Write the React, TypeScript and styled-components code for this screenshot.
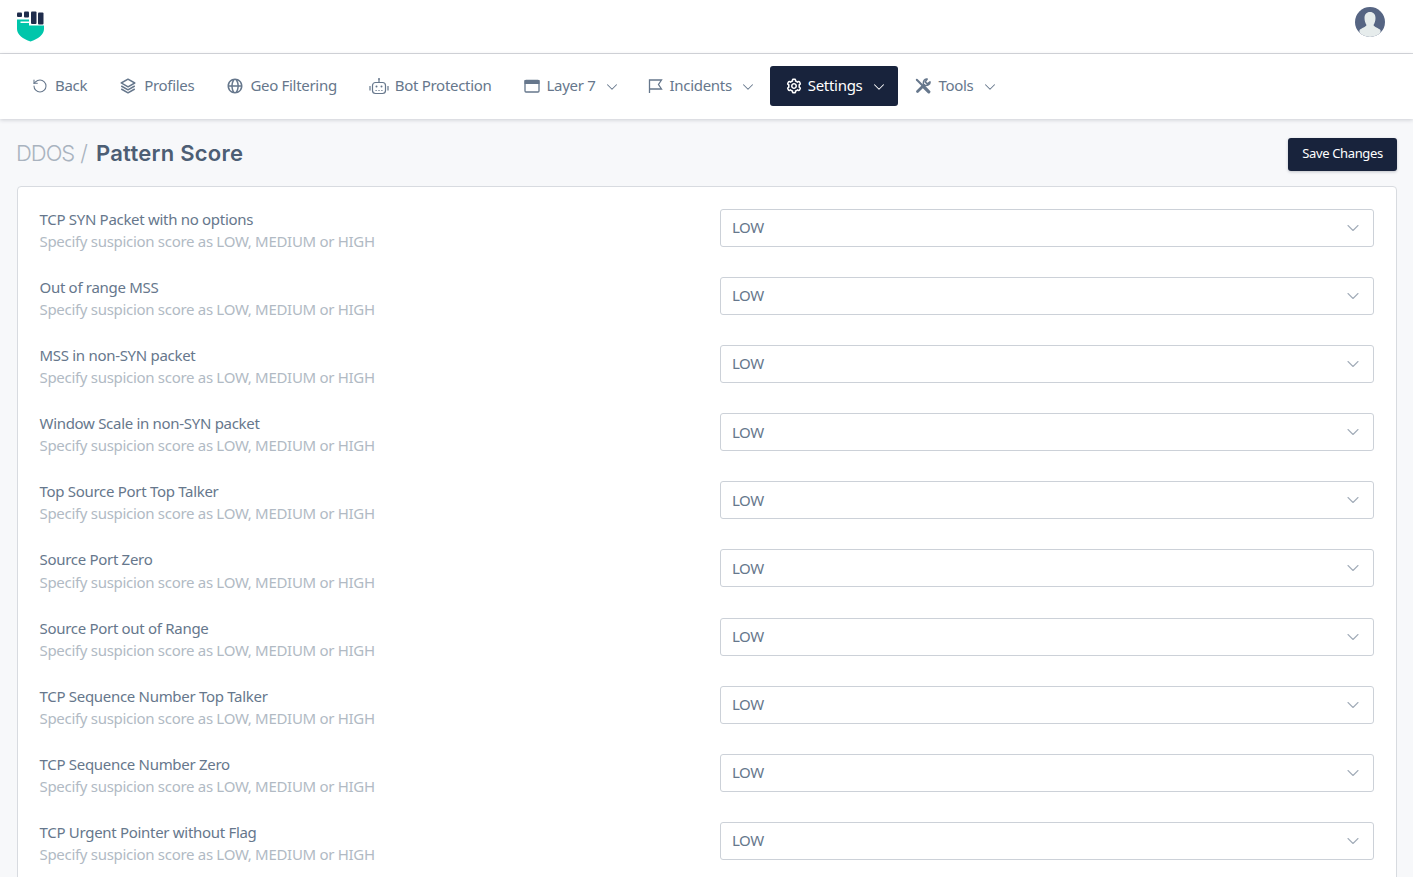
import React from "react";
import styled, { createGlobalStyle } from "styled-components";
import { ChevronDown, RotateCcw } from "lucide-react";
import { BiLayer, BiGlobe, BiCog } from "react-icons/bi";

const Global = createGlobalStyle`
  html, body { margin: 0; padding: 0; background: #f7f8fa; height: 100%; overflow: hidden; }
  body { font-family: "Noto Sans", "Liberation Sans", sans-serif; font-size: 15px; color: #5f7186; }
  * { box-sizing: border-box; }
`;

const TopBar = styled.header`
  height: 54px;
  background: #fff;
  border-bottom: 1px solid #d8dade;
  display: flex;
  align-items: flex-start;
  justify-content: space-between;
  padding: 11px 28px 0 17px;
`;

const AvatarWrap = styled.div`
  margin-top: -4px;
`;

const NavBar = styled.nav`
  height: 65px;
  background: #fff;
  box-shadow: 0 1px 4px rgba(30, 40, 60, 0.2);
  display: flex;
  align-items: flex-start;
  gap: 2px;
  padding: 12px 0 0 17px;
`;

const NavItem = styled.a<{ $active?: boolean }>`
  height: 40px;
  display: flex;
  align-items: center;
  padding: 0 15px 2.5px;
  border-radius: 3px;
  letter-spacing: -0.3px;
  color: ${(p) => (p.$active ? "#fff" : "#66778c")};
  background: ${(p) => (p.$active ? "#18233c" : "transparent")};
  svg.chev { margin: 4.5px -4.5px 0 7.5px; flex: none; }
`;

const NavIcon = styled.span<{ $w?: number }>`
  width: ${(p) => p.$w ?? 23}px;
  flex: none;
  display: flex;
  align-items: center;
  margin-top: 2.5px;
  svg { flex: none; }
`;

const Main = styled.main`
  padding: 19px 16px 0 17px;
`;

const TitleRow = styled.div`
  height: 48px;
  display: flex;
  justify-content: space-between;
  align-items: flex-start;
`;

const Title = styled.h1`
  margin: 0 0 0 -1px;
  height: 33px;
  line-height: 31px;
  font-family: Inter, sans-serif;
  font-size: 22px;
  font-weight: 300;
  color: #a9b3bf;
  letter-spacing: -1px;
  strong { font-weight: 600; color: #4d5e74; margin-left: 9px; letter-spacing: 0.25px; }
  span { margin-left: 6px; }
`;

const SaveButton = styled.button`
  width: 109px;
  height: 33px;
  border: 0;
  border-radius: 3px;
  background: #18233c;
  color: #fff;
  font: 13px "Noto Sans", sans-serif;
  letter-spacing: -0.35px;
  box-shadow: 0 1px 3px rgba(30, 40, 60, 0.25);
  padding: 0 0 3px;
`;

const Card = styled.section`
  background: #fff;
  border: 1px solid #d8dbe0;
  border-radius: 4px;
  padding: 21.9px 22px 0;
`;

const Row = styled.div`
  display: grid;
  grid-template-columns: 680px 1fr;
  height: 38.11px;
  margin-bottom: 30px;
`;

const Info = styled.div`
  margin: -1px 0 0 -0.5px;
  line-height: 22.1px;
  letter-spacing: -0.3px;
`;

const Name = styled.div`
  color: #66778c;
`;

const Hint = styled.div`
  color: #b1bac4;
`;

const Select = styled.div`
  height: 38px;
  display: flex;
  align-items: center;
  justify-content: space-between;
  padding: 0 10.5px 1.4px 11px;
  border: 1px solid #ccd1d8;
  border-radius: 3px;
  color: #66778c;
  letter-spacing: -0.5px;
  svg { color: #a3adb9; margin-top: 1.5px; }
`;

const Logo = () => (
  <svg width="28" height="31" viewBox="0 0 28 31">
    <rect x="0" y="1.5" width="5" height="4.5" rx="1" fill="#1f2c4c" />
    <rect x="7" y="0.5" width="5" height="6" rx="1" fill="#1f2c4c" />
    <rect x="14" y="0.5" width="5.5" height="12.5" rx="1" fill="#1f2c4c" />
    <rect x="21" y="1.5" width="5.5" height="12" rx="1" fill="#1f2c4c" />
    <path d="M0 8.5h12v6h15v3.5c0 5.5-6 10-13.500 12.500C6 28 0 23.500 0 18z" fill="#00c6ab" />
    <rect x="3.500" y="10.500" width="8.500" height="1.500" fill="#fff" />
  </svg>
);

const Avatar = () => (
  <svg width="30" height="30" viewBox="0 0 30 30">
    <defs><clipPath id="av"><circle cx="15" cy="15" r="15" /></clipPath></defs>
    <g clipPath="url(#av)">
      <rect width="30" height="30" fill="#566583" />
      <path d="M15 5c3.500 0 5.500 2.500 5.500 6 0 3-1 5.500-2 7 .5 2 5 3 7 5v7H4.500v-7c2-2 6.500-3 7-5-1-1.500-2-4-2-7 0-3.500 2-6 5.500-6z" fill="#e6ecec" />
    </g>
  </svg>
);

const WindowIcon = () => (
  <svg width="16" height="16" viewBox="0 0 16 16" fill="none" stroke="currentColor">
    <rect x="1" y="2.500" width="14" height="11.500" rx="1" strokeWidth="1.300" />
    <rect x="1" y="2.500" width="14" height="3" fill="currentColor" strokeWidth="1" />
  </svg>
);

const FlagIcon = () => (
  <svg width="16" height="16" viewBox="0 0 16 16" fill="none" stroke="currentColor" strokeWidth="1.300">
    <path d="M1.500 15V2h12l-3 4.500 3 4.500h-12" />
  </svg>
);

const BotIcon = () => (
  <svg width="20" height="18" viewBox="0 0 20 18" fill="none" stroke="currentColor" strokeWidth="1.200">
    <rect x="3.500" y="5.500" width="13" height="11" rx="3" />
    <path d="M10 2.500v3M1 9v4.500M19 9v4.500" />
    <circle cx="10" cy="2" r="1" fill="currentColor" stroke="none" />
    <circle cx="7.500" cy="9.500" r="1" fill="currentColor" stroke="none" />
    <circle cx="12.500" cy="9.500" r="1" fill="currentColor" stroke="none" />
    <path d="M6.500 13.500h7" strokeDasharray="1.200 1.700" />
  </svg>
);

const ToolsIcon = () => (
  <svg width="16" height="16" viewBox="0 0 16 16" fill="none" stroke="currentColor" strokeLinecap="round">
    <path d="M1.800 1.800 7 7" strokeWidth="2" />
    <path d="M9 9l4.800 4.800" strokeWidth="3.200" />
    <path d="M2.500 13.500 8.800 7.200" strokeWidth="2.800" />
    <path d="M15 3.800l-2.800 2.100-2-2 2-2.900C9.500.500 7.800 3 8.500 7c3.800 1.200 7-.6 6.500-3.200z" strokeWidth="1.500" strokeLinejoin="round" />
  </svg>
);

const chev = <ChevronDown className="chev" size={18} strokeWidth={1.4} />;

const rows = [
  "TCP SYN Packet with no options",
  "Out of range MSS",
  "MSS in non-SYN packet",
  "Window Scale in non-SYN packet",
  "Top Source Port Top Talker",
  "Source Port Zero",
  "Source Port out of Range",
  "TCP Sequence Number Top Talker",
  "TCP Sequence Number Zero",
  "TCP Urgent Pointer without Flag",
];

export default function App() {
  return (
    <>
      <Global />
      <TopBar>
        <Logo />
        <AvatarWrap><Avatar /></AvatarWrap>
      </TopBar>
      <NavBar>
        <NavItem><NavIcon><RotateCcw size={16} strokeWidth={1.6} /></NavIcon>Back</NavItem>
        <NavItem><NavIcon $w={25}><BiLayer size={18} /></NavIcon>Profiles</NavItem>
        <NavItem><NavIcon $w={24}><BiGlobe size={18} /></NavIcon>Geo Filtering</NavItem>
        <NavItem><NavIcon $w={26}><BotIcon /></NavIcon>Bot Protection</NavItem>
        <NavItem><NavIcon><WindowIcon /></NavIcon>Layer 7{chev}</NavItem>
        <NavItem><NavIcon $w={21}><FlagIcon /></NavIcon>Incidents{chev}</NavItem>
        <NavItem $active><NavIcon><BiCog size={18} /></NavIcon>Settings{chev}</NavItem>
        <NavItem><NavIcon><ToolsIcon /></NavIcon>Tools{chev}</NavItem>
      </NavBar>
      <Main>
        <TitleRow>
          <Title>DDOS<span>/</span><strong>Pattern Score</strong></Title>
          <SaveButton>Save Changes</SaveButton>
        </TitleRow>
        <Card>
          {rows.map((r) => (
            <Row key={r}>
              <Info>
                <Name>{r}</Name>
                <Hint>Specify suspicion score as LOW, MEDIUM or HIGH</Hint>
              </Info>
              <Select>LOW<ChevronDown size={20} strokeWidth={1.3} /></Select>
            </Row>
          ))}
        </Card>
      </Main>
    </>
  );
}
